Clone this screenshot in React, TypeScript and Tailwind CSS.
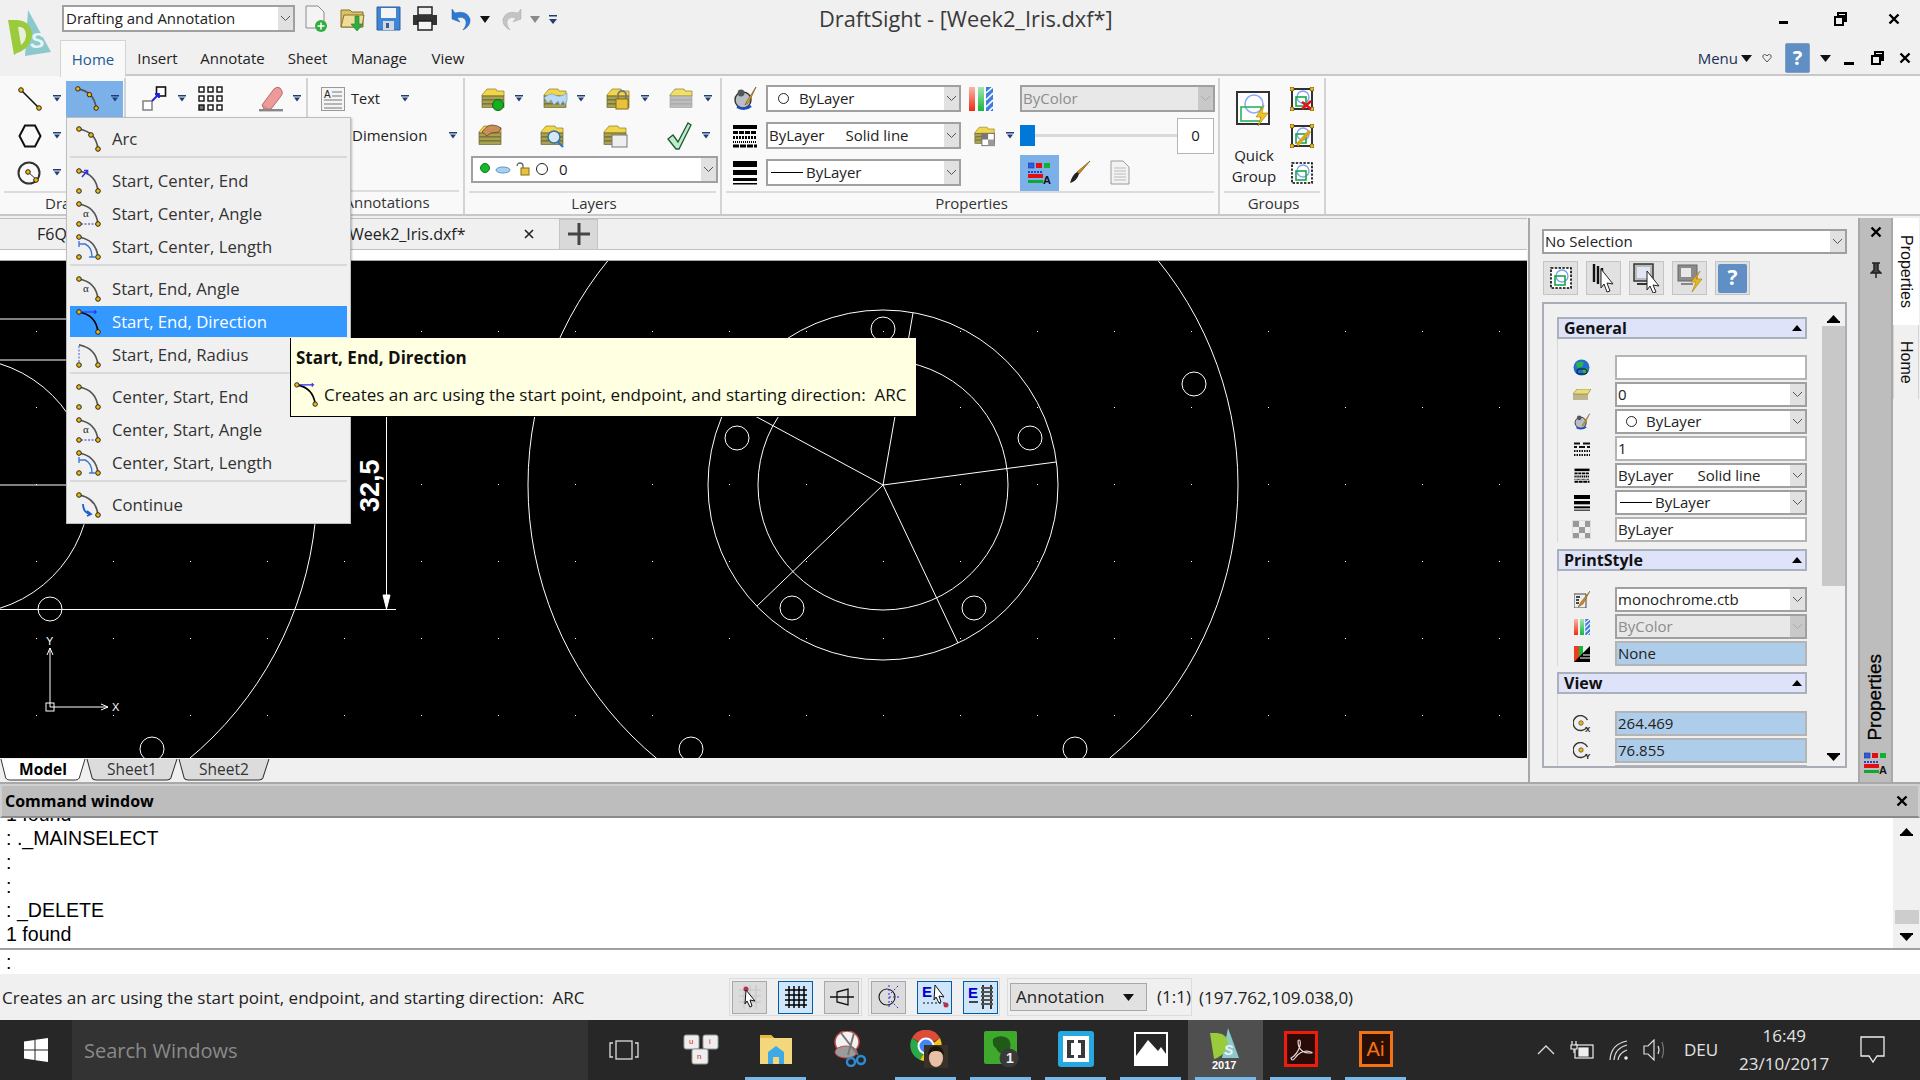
import type { ReactNode } from "react"
import clsx from "clsx"

// ---------- small shared bits ----------

function Drop({ className }: { className?: string }) {
  return (
    <svg width="8" height="7" viewBox="0 0 8 7" className={clsx("shrink-0", className)}>
      <rect x="0" y="0" width="8" height="1.5" fill="#1f3f73" />
      <path d="M1 2.5h6L4 6.5z" fill="#1f3f73" />
    </svg>
  )
}

function Chevron({ color = "#555" }: { color?: string }) {
  return (
    <svg width="11" height="7" viewBox="0 0 11 7">
      <path d="M1 1l4.5 4.5L10 1" fill="none" stroke={color} strokeWidth="1" />
    </svg>
  )
}

function Combo({ className, children, disabled }: { className?: string; children?: ReactNode; disabled?: boolean }) {
  return (
    <div className={clsx("flex shrink-0 border-2 border-[#a0a0a0]", disabled ? "bg-[#e8e8e8] text-[#8d8d8d]" : "bg-white", className)}>
      <div className="flex flex-1 items-center overflow-hidden whitespace-pre pl-[1px]">{children}</div>
      <div className={clsx("flex w-[15px] shrink-0 items-center justify-center", disabled ? "bg-[#c8c8c8]" : "bg-[#e1e1e1]")}>
        <Chevron color={disabled ? "#aaa" : "#555"} />
      </div>
    </div>
  )
}

function Tri({ up = true, className }: { up?: boolean; className?: string }) {
  return (
    <svg width="13" height="9" viewBox="0 0 13 9" className={className}>
      <path d={up ? "M6.5 1L12 7H1z" : "M6.5 8L12 2H1z"} fill="#000" />
      <rect x="0" y={up ? 7 : 0} width="13" height="2" fill="#000" />
    </svg>
  )
}

function CloseX({ size = 12 }: { size?: number }) {
  return (
    <svg width={size} height={size} viewBox="0 0 12 12">
      <path d="M1.5 1.5l9 9M10.5 1.5l-9 9" stroke="#000" strokeWidth="2.4" />
    </svg>
  )
}

function Restore() {
  return (
    <svg width="13" height="14" viewBox="0 0 13 14">
      <path d="M4 1h8v8h-2V4H4z" fill="none" stroke="#000" strokeWidth="2" />
      <rect x="1" y="5" width="8" height="8" fill="#f0f0f0" stroke="#000" strokeWidth="2" />
    </svg>
  )
}

function Pt({ x, y }: { x: number; y: number }) {
  return <circle cx={x} cy={y} r="2.3" fill="#f4b70a" stroke="#222" strokeWidth="1" />
}

// ---------- arc icons of the flyout ----------

function ArcIcon({ kind, size = 26 }: { kind: string; size?: number }) {
  const bottomLeft = ["sce", "sca", "scl", "ser", "cse", "csa", "csl"].includes(kind)
  const dark = kind === "sed"
  return (
    <svg width={size} height={size} viewBox="0 0 26 26" className="shrink-0">
      <path d="M3 3Q20 6 22 23" fill="none" stroke={dark ? "#000" : "#555"} strokeWidth="1.7" />
      {kind === "sed" && <path d="M3 3H21M19 1v4" stroke="#2a2af0" strokeWidth="1.2" fill="none" />}
      {kind === "sce" && <path d="M6 9L11 3M8 2.5h3.5v4" stroke="#3333e0" strokeWidth="1.6" fill="none" />}
      {(kind === "scl" || kind === "csl") && <path d="M3 10h7M3 7v6M9 10q7 3 7 13M13 23h6" stroke="#3b78d8" strokeWidth="1.4" fill="none" />}
      {kind === "ser" && <path d="M3 4v18" stroke="#3b5bd8" strokeWidth="1" strokeDasharray="2 1.5" />}
      {(kind === "sca" || kind === "csa") && <path d="M5 23h15" stroke="#2a2ae0" strokeWidth="1.2" strokeDasharray="2 1.5" />}
      {(kind === "sca" || kind === "csa" || kind === "sea") && (
        <text x="7" y="16" fontSize="11" fontFamily="Liberation Serif, serif" fill="#222">α</text>
      )}
      {kind === "cont" && <path d="M7 12q0 9 8 10M11 19l4 3-4 2" stroke="#1f5fd0" strokeWidth="1.8" fill="none" />}
      {kind !== "ser" && <Pt x={3} y={3} />}
      {kind === "ser" && <path d="M3 3q3 0 5 1" stroke="#555" fill="none" />}
      {kind === "arc" && <Pt x={15} y={9} />}
      {bottomLeft && <Pt x={3} y={23} />}
      <Pt x={22} y={23} />
    </svg>
  )
}

function MenuRow({ kind, label, active }: { kind: string; label: string; active?: boolean }) {
  return (
    <div className="h-[33px] pt-[1px]">
      <div className={clsx("mx-[3px] flex h-[31px] items-center pl-[6px] text-[16.7px]", active ? "bg-[#3399ff] text-white" : "text-[#333]")}>
        <ArcIcon kind={kind} />
        <span className="ml-[10px] whitespace-nowrap">{label}</span>
      </div>
    </div>
  )
}

function MenuSep() {
  return <div className="mx-[3px] mb-[6px] mt-[1px] h-[2px] bg-[#d9d9d9]" />
}

// ---------- ribbon icons ----------

function LayerIcon({ kind, w = 25 }: { kind: string; w?: number }) {
  const grey = kind === "grey"
  return (
    <svg width={w} height="24" viewBox="0 0 25 24" className="shrink-0">
      <path d="M1 8l5-6h9l1 2h7v5H1z" fill={grey ? "#f2df6a" : "#f2d64a"} stroke="#8a7a2a" strokeWidth=".7" />
      {[9, 13, 17].map((y) => (
        <rect key={y} x="1" y={y} width="22" height="3.4" fill={grey ? "#bdbdbd" : "#a8a24e"} stroke={grey ? "#999" : "#55521f"} strokeWidth=".6" />
      ))}
      {kind === "on" && <circle cx="17" cy="18" r="5.5" fill="#12b022" stroke="#0a6a12" />}
      {kind === "frost" && <path d="M1 11q6-6 11-3t12-2v7l-2 5-2-4-3 5-2-5-4 4-3-5-3 3z" fill="#b9d9f4" stroke="#6f9cc9" strokeWidth=".7" />}
      {kind === "lock" && (
        <g>
          <path d="M12 12V8a4 4 0 018 0v4" fill="none" stroke="#777" strokeWidth="1.8" />
          <rect x="10" y="12" width="12" height="10" fill="#e8c23e" stroke="#8a6d10" />
        </g>
      )}
      {kind === "hand" && <path d="M4 8q5-7 10-7t9 3l-2 4-8 1-4 3z" fill="#c98d5a" stroke="#6d4322" strokeWidth=".8" />}
      {kind === "find" && (
        <g>
          <circle cx="14" cy="13" r="6" fill="#d7e7ef" stroke="#3a6ea5" strokeWidth="1.6" />
          <path d="M18 18l5 5" stroke="#2f78c4" strokeWidth="2.4" />
        </g>
      )}
      {kind === "sheet" && <rect x="9" y="11" width="15" height="12" fill="#eee" stroke="#777" />}
      {kind === "checker" && (
        <g>
          <rect x="9" y="9" width="14" height="14" fill="#fff" stroke="#666" />
          <rect x="9" y="9" width="7" height="7" fill="#777" />
          <rect x="16" y="16" width="7" height="7" fill="#999" />
        </g>
      )}
    </svg>
  )
}

function ColorIcon({ size = 26 }: { size?: number }) {
  return (
    <svg width={size} height={size} viewBox="0 0 26 26" className="shrink-0">
      <circle cx="11" cy="14" r="8" fill="#b9bec6" stroke="#333" strokeWidth="1.4" />
      <circle cx="9" cy="7" r="3.4" fill="#555" />
      <path d="M5 21q8 4 14-1" stroke="#1c4fc4" strokeWidth="2.4" fill="none" />
      <path d="M24 1L15 15l-2 4 4-3z" fill="#e2a82b" stroke="#7a5510" strokeWidth=".7" />
    </svg>
  )
}

function BarsIcon({ w = 24, h = 24 }: { w?: number; h?: number }) {
  return (
    <svg width={w} height={h} viewBox="0 0 24 24" className="shrink-0">
      <defs>
        <linearGradient id="rd" x1="0" y1="0" x2="0" y2="1"><stop offset="0" stopColor="#f7b8ad" /><stop offset="1" stopColor="#f22a10" /></linearGradient>
        <linearGradient id="gr" x1="0" y1="0" x2="0" y2="1"><stop offset="0" stopColor="#a5e5b5" /><stop offset="1" stopColor="#14b83c" /></linearGradient>
      </defs>
      <rect x="0" y="0" width="6" height="24" fill="url(#rd)" />
      <rect x="9" y="0" width="6" height="24" fill="url(#gr)" />
      <rect x="17" y="0" width="7" height="24" fill="#3d7de0" />
      <path d="M17 6l7-6M17 13l7-7M17 20l7-7M20 24l4-4" stroke="#fff" strokeWidth="1.6" />
    </svg>
  )
}

function LineTypeIcon({ w = 24, h = 24 }: { w?: number; h?: number }) {
  return (
    <svg width={w} height={h} viewBox="0 0 24 24" className="shrink-0">
      <rect x="0" y="1" width="24" height="4" fill="#000" />
      <path d="M0 8.5h24" stroke="#000" strokeWidth="3" strokeDasharray="5 1" />
      <path d="M0 13.5h24" stroke="#000" strokeWidth="3" strokeDasharray="2 1" />
      <path d="M0 18h24" stroke="#000" strokeWidth="2" strokeDasharray="1 1" />
      <path d="M0 22h24" stroke="#000" strokeWidth="3" strokeDasharray="6 1" />
    </svg>
  )
}

function LineWeightIcon({ w = 24, h = 24 }: { w?: number; h?: number }) {
  return (
    <svg width={w} height={h} viewBox="0 0 24 24" className="shrink-0">
      <rect x="0" y="0" width="24" height="6" fill="#000" />
      <rect x="0" y="9" width="24" height="5" fill="#000" />
      <rect x="0" y="17" width="24" height="3" fill="#000" />
      <rect x="0" y="22" width="24" height="1.5" fill="#000" />
    </svg>
  )
}

function StyleIcon() {
  return (
    <svg width="24" height="22" viewBox="0 0 24 22" className="shrink-0">
      <rect x="0" y="1" width="6" height="5" fill="#2b5ce0" stroke="#1a3a9a" strokeWidth=".6" />
      <rect x="8" y="1" width="6" height="5" fill="#e01010" />
      <rect x="16" y="1" width="6" height="5" fill="#10b030" />
      <path d="M0 10h15" stroke="#2b3fd0" strokeWidth="2" strokeDasharray="2 1" />
      <rect x="0" y="12" width="15" height="4" fill="#e01010" />
      <rect x="0" y="18" width="15" height="3" fill="#10a830" />
      <text x="15" y="21.5" fontSize="11" fontWeight="700" fontFamily="Liberation Sans, sans-serif" fill="#111">A</text>
    </svg>
  )
}

function GroupIcon({ kind }: { kind: "del" | "edit" | "sel" }) {
  return (
    <svg width="24" height="24" viewBox="0 0 24 24" className="shrink-0">
      <rect x="2" y="2" width="20" height="20" fill="#fff" stroke="#000" strokeWidth="1.6" strokeDasharray={kind === "sel" ? "2.4 1.4" : undefined} />
      <circle cx="13" cy="10" r="6" fill="none" stroke="#7fa5ea" strokeWidth="1.4" />
      <rect x="6" y="10" width="10" height="9" fill="none" stroke="#18a84a" strokeWidth="1.6" />
      {kind !== "sel" && [[2, 2], [22, 2], [2, 22], [22, 22]].map(([x, y]) => <circle key={x * 100 + y} cx={x} cy={y} r="2.2" fill="#f4b70a" stroke="#222" strokeWidth=".6" />)}
      {kind === "del" && <path d="M12 15l9 7M21 14l-9 8" stroke="#e5101a" strokeWidth="2.6" />}
      {kind === "edit" && <path d="M7 21L20 7" stroke="#d9a520" strokeWidth="3.4" />}
    </svg>
  )
}

// ---------- ribbon groups ----------

function RibbonGroup({ label, className, children }: { label?: string; className?: string; children: ReactNode }) {
  return (
    <div className={clsx("mt-[2px] flex h-[136px] shrink-0 flex-col border-r-2 border-[#d4d4d4]", className)}>
      <div className="flex-1 pt-[2px]">{children}</div>
      <div className="mx-[4px] flex h-[24px] items-center justify-center border-t-2 border-[#dcdcdc] pb-[2px] pl-[3px] text-[#333]">{label}</div>
    </div>
  )
}

function Row({ children, className }: { children: ReactNode; className?: string }) {
  return <div className={clsx("flex h-[37px] items-center", className)}>{children}</div>
}

function Ribbon() {
  return (
    <div className="flex h-[140px] shrink-0 border-b-2 border-[#c8c8c8] bg-[#f9f9f9]">
      <RibbonGroup label="Draw" className="w-[126px]">
        <Row>
          <svg width="24" height="24" viewBox="0 0 24 24" className="ml-[18px]">
            <path d="M3 3l18 18" stroke="#111" strokeWidth="1.6" />
            <Pt x={3} y={3} />
            <Pt x={21} y={21} />
          </svg>
          <Drop className="ml-[11px]" />
          <div className="ml-[5px] flex h-[36px] w-[57px] items-center bg-[#7cb0e8] pl-[9px]">
            <ArcIcon kind="arc" size={25} />
            <Drop className="ml-[11px]" />
          </div>
        </Row>
        <Row>
          <svg width="24" height="24" viewBox="0 0 24 24" className="ml-[18px]">
            <path d="M7 1.5h10L22.500 12 17 22.500H7L1.500 12z" fill="none" stroke="#111" strokeWidth="2" />
          </svg>
          <Drop className="ml-[11px]" />
        </Row>
        <Row>
          <svg width="26" height="24" viewBox="0 0 26 24" className="ml-[17px]">
            <circle cx="12" cy="12" r="10.500" fill="none" stroke="#333" strokeWidth="2" />
            <path d="M11 11l9 8" stroke="#333" strokeWidth="1" />
            <Pt x={11} y={11} />
            <Pt x={19} y={19} />
          </svg>
          <Drop className="ml-[10px]" />
        </Row>
      </RibbonGroup>

      <RibbonGroup label="Modify" className="w-[182px]">
        <Row>
          <svg width="25" height="25" viewBox="0 0 25 25" className="ml-[16px]">
            <rect x="14.500" y="1" width="9" height="9" fill="#fff" stroke="#111" strokeWidth="1.600" />
            <rect x="1" y="15" width="9" height="9" fill="#fff" stroke="#888" strokeWidth="1.600" />
            <path d="M10 15l6-6M13 8h4v4" stroke="#2020e0" strokeWidth="1.800" fill="none" />
          </svg>
          <Drop className="ml-[11px]" />
          <svg width="25" height="25" viewBox="0 0 25 25" className="ml-[12px]">
            {[1, 10, 19].flatMap((y) => [1, 10, 19].map((x) => (
              <rect key={x * 100 + y} x={x} y={y} width="5" height="5" fill={y === 19 && x === 1 ? "#777" : "#fff"} stroke="#111" strokeWidth="1.400" />
            )))}
          </svg>
          <svg width="25" height="26" viewBox="0 0 25 26" className="ml-[36px]">
            <path d="M3 19L15 3q3-3 6-1l2 3q1 3-1 5L12 23H5z" fill="#ef9a9a" stroke="#b86a6a" />
            <path d="M3 19l6 4" stroke="#c98080" />
            <rect x="0" y="23" width="24" height="2.400" fill="#888" />
          </svg>
          <Drop className="ml-[9px]" />
        </Row>
      </RibbonGroup>

      <RibbonGroup label="Annotations" className="w-[157px]">
        <Row>
          <svg width="24" height="24" viewBox="0 0 24 24" className="ml-[13px]">
            <rect x=".5" y=".5" width="23" height="23" fill="#f4f4f4" stroke="#999" />
            <text x="3" y="11" fontSize="10" fontFamily="Liberation Sans, sans-serif" fill="#222">A</text>
            <path d="M11 5h10M11 9h10M3 13h18M3 17h18M3 21h18" stroke="#777" />
          </svg>
          <span className="ml-[6px] w-[46px] text-[14.500px]">Text</span>
          <Drop className="ml-[4px]" />
        </Row>
        <Row>
          <span className="ml-[44px] w-[97px] whitespace-nowrap">Dimension</span>
          <Drop />
        </Row>
      </RibbonGroup>

      <RibbonGroup label="Layers" className="w-[257px]">
        <Row>
          <span className="ml-[16px]"><LayerIcon kind="on" /></span>
          <Drop className="ml-[9px]" />
          <span className="ml-[20px]"><LayerIcon kind="frost" /></span>
          <Drop className="ml-[9px]" />
          <span className="ml-[21px]"><LayerIcon kind="lock" /></span>
          <Drop className="ml-[10px]" />
          <span className="ml-[20px]"><LayerIcon kind="grey" /></span>
          <Drop className="ml-[10px]" />
        </Row>
        <Row>
          <span className="ml-[13px]"><LayerIcon kind="hand" /></span>
          <span className="ml-[37px]"><LayerIcon kind="find" /></span>
          <span className="ml-[38px]"><LayerIcon kind="sheet" /></span>
          <svg width="25" height="30" viewBox="0 0 25 30" className="ml-[39px]">
            <path d="M1 18l5-4 5 7L21 2l3 2-12 24-3 0z" fill="#bfeccb" stroke="#1f5a34" strokeWidth="1.300" />
          </svg>
          <Drop className="ml-[10px]" />
        </Row>
        <Row>
          <Combo className="mb-[7px] ml-[6px] h-[27px] w-[247px]">
            <svg width="78" height="20" viewBox="0 0 78 20" className="ml-[3px] shrink-0">
              <circle cx="8" cy="9" r="4.500" fill="#14b82a" stroke="#0e7a1c" />
              <ellipse cx="26" cy="11" rx="7" ry="3" fill="#a9d0f0" stroke="#5f96c8" />
              <rect x="44" y="9" width="8" height="7" fill="#e8c23e" stroke="#8a6d10" />
              <path d="M40 7a3 3 0 016 0v2" fill="none" stroke="#666" strokeWidth="1.300" />
              <circle cx="65" cy="10" r="5.500" fill="#fff" stroke="#222" />
            </svg>
            <span className="ml-[4px]">0</span>
          </Combo>
        </Row>
      </RibbonGroup>

      <RibbonGroup label="Properties" className="w-[498px]">
        <Row>
          <span className="ml-[10px]"><ColorIcon /></span>
          <Combo className="ml-[8px] h-[27px] w-[195px]">
            <span className="ml-[9px] mr-[10px] inline-block h-[11px] w-[11px] rounded-full border border-[#222]" />
            <span>ByLayer</span>
          </Combo>
          <span className="ml-[8px]"><BarsIcon /></span>
          <Combo disabled className="ml-[27px] h-[27px] w-[195px] border-[#9aa5b5]">ByColor</Combo>
        </Row>
        <Row>
          <span className="ml-[11px]"><LineTypeIcon /></span>
          <Combo className="ml-[9px] h-[27px] w-[195px]">
            <span>ByLayer</span>
            <span className="ml-[21px]">Solid line</span>
          </Combo>
          <span className="ml-[13px]"><LayerIcon kind="checker" w={22} /></span>
          <Drop className="ml-[10px]" />
          <div className="ml-[6px] flex w-[195px] items-center">
            <div className="h-[21px] w-[15px] bg-[#0078d7]" />
            <div className="h-[3px] w-[142px] bg-[#dadada]" />
            <div className="flex h-[36px] w-[37px] items-center justify-center border border-[#b5b5b5] bg-white">0</div>
          </div>
        </Row>
        <Row>
          <span className="ml-[11px]"><LineWeightIcon /></span>
          <Combo className="ml-[9px] h-[27px] w-[195px]">
            <span className="ml-[2px] mr-[3px] h-[1px] w-[32px] bg-black" />
            <span>ByLayer</span>
          </Combo>
          <div className="ml-[59px] flex h-[36px] w-[39px] items-center justify-center bg-[#7cb0e8]"><StyleIcon /></div>
          <svg width="23" height="25" viewBox="0 0 23 25" className="ml-[9px]">
            <path d="M22 1L11 14l-2-2z" fill="#c98a26" stroke="#7a5010" strokeWidth=".7" />
            <path d="M9 12l2 2q-2 7-9 9 2-8 7-11z" fill="#222" />
          </svg>
          <svg width="20" height="25" viewBox="0 0 20 25" className="ml-[19px]">
            <path d="M1 1h12l6 6v17H1z" fill="#f2f2f2" stroke="#9a9a9a" />
            <path d="M4 8h12M4 11h12M4 14h12M4 17h12M4 20h12" stroke="#bbb" />
          </svg>
        </Row>
      </RibbonGroup>

      <RibbonGroup label="Groups" className="w-[106px]">
        <div className="flex">
          <div className="flex w-[68px] flex-col items-center pt-[10px]">
            <svg width="36" height="36" viewBox="0 0 36 36" className="ml-[-2px]">
              <rect x="2" y="2" width="32" height="32" fill="#fff" stroke="#333" strokeWidth="2" />
              <circle cx="19" cy="14" r="9" fill="none" stroke="#8aaef0" strokeWidth="1.600" />
              <rect x="6" y="17" width="20" height="14" fill="none" stroke="#2cb35a" strokeWidth="1.600" />
              <path d="M29 15l-8 12h5l-3 9 10-13h-6z" fill="#f2c21e" stroke="#a57f10" strokeWidth=".6" />
            </svg>
            <div className="mt-[19px] text-center leading-[21px]">Quick<br />Group</div>
          </div>
          <div className="ml-[2px] flex flex-col">
            <Row><GroupIcon kind="del" /></Row>
            <Row><GroupIcon kind="edit" /></Row>
            <Row><GroupIcon kind="sel" /></Row>
          </div>
        </div>
      </RibbonGroup>
    </div>
  )
}

// ---------- header ----------

function Header() {
  const tabs = [
    { label: "Insert", w: "w-[39px]" },
    { label: "Annotate", w: "w-[63px]" },
    { label: "Sheet", w: "w-[39px]" },
    { label: "Manage", w: "w-[56px]" },
    { label: "View", w: "w-[34px]" },
  ]
  return (
    <div className="flex h-[76px] shrink-0">
      <div className="w-[60px] shrink-0 pl-[7px] pt-[10px]">
        <svg width="45" height="46" viewBox="0 0 45 46">
          <path d="M21 0L44 42 18 46z" fill="#8cc8cc" />
          <path d="M1 10h9q14 1 15 15-1 13-15 18l-3 2z" fill="#9acb3c" />
          <path d="M11 17l3 0q5 2 5 8t-5 10z" fill="#e9efd8" />
          <text x="23" y="38" fontSize="22" fontStyle="italic" fontWeight="700" fontFamily="Liberation Sans, sans-serif" fill="#e8f3f3">S</text>
        </svg>
      </div>
      <div className="flex min-w-0 flex-1 flex-col">
        <div className="flex h-[40px] items-start pt-[5px]">
          <Combo className="ml-[2px] h-[27px] w-[233px]">
            <span className="ml-[1px]">Drafting and Annotation</span>
          </Combo>
          <svg width="24" height="27" viewBox="0 0 24 27" className="ml-[9px]">
            <path d="M2 1h12l6 6v16H2z" fill="#f4f4f4" stroke="#8a8a8a" />
            <circle cx="17" cy="21" r="6" fill="#2fae3f" />
            <path d="M17 17.500v7M13.500 21h7" stroke="#fff" strokeWidth="1.500" />
          </svg>
          <svg width="25" height="27" viewBox="0 0 25 27" className="ml-[12px]">
            <path d="M1 5h9l2 2h11v15H1z" fill="#d9c06a" stroke="#8a7326" />
            <path d="M4 10h20l-2 12H1z" fill="#efdc98" stroke="#8a7326" />
            <path d="M15 11v8h-4l6 7 6-7h-4v-8z" fill="#2fae3f" stroke="#1f7a2b" strokeWidth=".6" />
          </svg>
          <svg width="25" height="25" viewBox="0 0 25 25" className="ml-[11px] mt-[1px]">
            <path d="M1 1h23v23H1z" fill="#3f86d6" stroke="#2a5f9f" />
            <rect x="5" y="2" width="15" height="10" fill="#f4f4f4" />
            <rect x="7" y="15" width="11" height="9" fill="#cfd8e3" />
            <rect x="10" y="17" width="3" height="5" fill="#3a5f8f" />
          </svg>
          <svg width="26" height="25" viewBox="0 0 26 25" className="ml-[11px] mt-[1px]">
            <rect x="6" y="1" width="14" height="8" fill="#eee" stroke="#222" strokeWidth="1.500" />
            <path d="M1 9h24v10H1z" fill="#333" />
            <rect x="6" y="15" width="14" height="9" fill="#f4f4f4" stroke="#222" strokeWidth="1.500" />
          </svg>
          <svg width="24" height="25" viewBox="0 0 24 25" className="ml-[11px] mt-[1px]">
            <path d="M3 13V3l3 4q12-3 15 6 1 7-7 11 5-6 2-11-3-3-8-1l3 4z" fill="#2b7ad4" stroke="#1b5aa8" strokeWidth=".5" />
          </svg>
          <svg width="10" height="7" viewBox="0 0 10 7" className="ml-[7px] mt-[11px]"><path d="M0 0h10L5 7z" fill="#111" /></svg>
          <svg width="24" height="25" viewBox="0 0 24 25" className="ml-[10px] mt-[1px] scale-x-[-1]">
            <path d="M3 13V3l3 4q12-3 15 6 1 7-7 11 5-6 2-11-3-3-8-1l3 4z" fill="#c4c4c4" stroke="#a8a8a8" strokeWidth=".5" />
          </svg>
          <svg width="10" height="7" viewBox="0 0 10 7" className="ml-[6px] mt-[11px]"><path d="M0 0h10L5 7z" fill="#8a8a8a" /></svg>
          <svg width="8" height="10" viewBox="0 0 8 10" className="ml-[9px] mt-[10px]">
            <rect x="0" y="0" width="8" height="1.500" fill="#1f3f73" />
            <path d="M0 4h8L4 9z" fill="#1f3f73" />
          </svg>
          <div className="ml-[262px] mt-[-1px] whitespace-nowrap text-[21.800px] leading-[30px] text-[#3a3a3a]">DraftSight - [Week2_Iris.dxf*]</div>
          <div className="ml-auto flex">
            <div className="mr-[46px] mt-[16px] h-[3px] w-[9px] bg-black" />
            <div className="mr-[41px] mt-[7px]"><Restore /></div>
            <div className="mr-[20px] mt-[8px]"><CloseX /></div>
          </div>
        </div>
        <div className="flex h-[36px] items-center border-b-2 border-[#c8c8c8] pt-[2px]">
          <div className="z-10 flex h-[37px] w-[66px] items-center justify-center border border-b-0 border-[#d4d4d4] bg-[#f9f9f9] pt-[1px] text-[#1f5a96]">Home</div>
          <div className="ml-[12px] flex gap-[24px] text-[#222]">
            {tabs.map((t) => (
              <div key={t.label} className={clsx("flex justify-center whitespace-nowrap", t.w)}>{t.label}</div>
            ))}
          </div>
          <div className="ml-auto flex items-center">
            <span className="mr-[3px] text-[#1c2f55]">Menu</span>
            <svg width="11" height="7" viewBox="0 0 11 7"><path d="M0 0h11L5.500 7z" fill="#111" /></svg>
            <svg width="10" height="10" viewBox="0 0 10 10" className="ml-[10px]"><path d="M5 9L1 4.500Q0 2 2.500 1.500 4 1.500 5 3q1-1.500 2.500-1.500Q10 2 9 4.500z" fill="none" stroke="#555" /></svg>
            <div className="ml-[13px] flex h-[30px] w-[25px] items-center justify-center rounded-[2px] border border-[#7f9fc5] bg-[#5f8fc4] text-[20px] font-bold text-white">?</div>
            <svg width="11" height="7" viewBox="0 0 11 7" className="ml-[10px]"><path d="M0 0h11L5.500 7z" fill="#111" /></svg>
            <div className="ml-[13px] mt-[10px] h-[3px] w-[10px] bg-black" />
            <div className="ml-[17px]"><Restore /></div>
            <div className="ml-[15px] mr-[9px]"><CloseX /></div>
          </div>
        </div>
      </div>
    </div>
  )
}

// ---------- drawing area ----------

function Drawing() {
  const xs = Array.from({ length: 20 }, (_, i) => 36 + 77 * i)
  const ys = [331, 407, 484, 561, 638, 715]
  const holes = [
    [883, 329], [1030, 438], [974, 608], [792, 608], [737, 438],
    [1194, 384], [1075, 749], [691, 749], [152, 749], [50, 609],
  ]
  return (
    <svg viewBox="0 261 1527 497" className="block h-[497px] w-[1527px] bg-black" fill="none" stroke="#fff" strokeWidth="1">
      {xs.flatMap((x) => ys.map((y) => <rect key={`${x}-${y}`} x={x} y={y} width="1" height="1" fill="#fff" stroke="none" />))}
      <circle cx="883" cy="485" r="355" />
      <circle cx="883" cy="485" r="175" />
      <circle cx="883" cy="485" r="125" />
      <circle cx="-38" cy="486" r="355" />
      <circle cx="-38" cy="486" r="128" />
      {holes.map(([x, y]) => <circle key={x * 1000 + y} cx={x} cy={y} r="12" />)}
      <path d="M883 485L913 313M883 485L1056 462M883 485L958 643M883 485L757 606M883 485L729 402" />
      <path d="M0 319H70M0 360H70M0 485H70M0 609.500H396M386.500 416V609" />
      <path d="M383 595h7l-3.500 14z" fill="#fff" />
      <text x="0" y="0" transform="translate(379 512) rotate(-90)" fontSize="27" fontWeight="700" fontFamily="Liberation Sans, sans-serif" fill="#fff" stroke="none">32,5</text>
      <path d="M50 648V707H108M47 655l3-7 3 7M101 704l7 3-7 3" />
      <rect x="46" y="703" width="8" height="8" />
      <text x="46" y="645" fontSize="11" fontFamily="Liberation Sans, sans-serif" fill="#fff" stroke="none">Y</text>
      <text x="112" y="711" fontSize="11" fontFamily="Liberation Sans, sans-serif" fill="#fff" stroke="none">X</text>
    </svg>
  )
}

function SheetTab({ label, active, w }: { label: string; active?: boolean; w: string }) {
  return (
    <div className={clsx("relative flex h-[22px] items-center justify-center", w, active ? "font-bold text-black" : "text-[#333]")}>
      <svg viewBox="0 0 90 22" preserveAspectRatio="none" className="absolute inset-0 h-full w-full">
        <path d="M1 0L6 19Q7 21 10 21H79Q82 21 83 19L89 0" fill={active ? "#fff" : "#dcdcdc"} stroke="#333" strokeWidth="1" vectorEffect="non-scaling-stroke" />
      </svg>
      <span className="relative">{label}</span>
    </div>
  )
}

function DocArea() {
  return (
    <div className="flex w-[1527px] shrink-0 flex-col">
      <div className="flex h-[43px] flex-col">
        <div className="flex h-[32px] items-center border-y border-[#c0c0c0] bg-[#f0f0f0]">
          <span className="ml-[37px] w-[312px] text-[16px]">F6Q</span>
          <span className="w-[175px] whitespace-nowrap text-[16px]">Week2_Iris.dxf*</span>
          <svg width="10" height="10" viewBox="0 0 10 10"><path d="M1 1l8 8M9 1l-8 8" stroke="#222" strokeWidth="1.600" /></svg>
          <div className="ml-[25px] flex h-[31px] w-[39px] items-center justify-center border border-[#c4c4c4] bg-[#d9d9d9]">
            <svg width="22" height="22" viewBox="0 0 22 22"><path d="M11 0v22M0 11h22" stroke="#444" strokeWidth="3" /></svg>
          </div>
        </div>
        <div className="flex-1 border-b border-[#a8a8a8] bg-white" />
      </div>
      <Drawing />
      <div className="flex h-[24px] bg-[#f0f0f0] pt-[1px] text-[15.500px]">
        <SheetTab label="Model" active w="w-[86px]" />
        <SheetTab label="Sheet1" w="w-[92px]" />
        <SheetTab label="Sheet2" w="w-[92px]" />
      </div>
    </div>
  )
}

// ---------- flyout and tooltip ----------

function ArcMenu() {
  return (
    <div className="absolute left-[66px] top-[117px] z-20 w-[285px] border border-[#bdbdbd] bg-[#f0f0f0] pb-[2px] pt-[4px] shadow-[1px_1px_2px_rgba(0,0,0,0.25)]">
      <MenuRow kind="arc" label="Arc" />
      <MenuSep />
      <MenuRow kind="sce" label="Start, Center, End" />
      <MenuRow kind="sca" label="Start, Center, Angle" />
      <MenuRow kind="scl" label="Start, Center, Length" />
      <MenuSep />
      <MenuRow kind="sea" label="Start, End, Angle" />
      <MenuRow kind="sed" label="Start, End, Direction" active />
      <MenuRow kind="ser" label="Start, End, Radius" />
      <MenuSep />
      <MenuRow kind="cse" label="Center, Start, End" />
      <MenuRow kind="csa" label="Center, Start, Angle" />
      <MenuRow kind="csl" label="Center, Start, Length" />
      <MenuSep />
      <MenuRow kind="cont" label="Continue" />
    </div>
  )
}

function Tooltip() {
  return (
    <div className="absolute left-[290px] top-[338px] z-30 flex h-[79px] w-[626px] flex-col border-b border-l border-black bg-[#ffffe1] text-[17px] text-[#111]">
      <div className="ml-[5px] mt-[8px] font-bold leading-[24px]">Start, End, Direction</div>
      <div className="ml-[3px] mt-[12px] flex items-center">
        <ArcIcon kind="sed" size={25} />
        <span className="ml-[5px] whitespace-pre">Creates an arc using the start point, endpoint, and starting direction:  ARC</span>
      </div>
    </div>
  )
}

// ---------- properties panel ----------

function PropRow({ icon, children }: { icon: ReactNode; children: ReactNode }) {
  return (
    <div className="mb-[2px] flex h-[25px]">
      <div className="flex w-[57px] shrink-0 items-center justify-center pr-[10px]">{icon}</div>
      {children}
    </div>
  )
}

function Value({ children, blue }: { children?: ReactNode; blue?: boolean }) {
  return (
    <div className={clsx("flex w-[192px] items-center overflow-hidden whitespace-pre border-2 border-[#b4b4b4] pl-[1px]", blue ? "border-[#a5bcd6] bg-[#aecdea]" : "bg-white")}>
      {children}
    </div>
  )
}

function SectionHead({ label }: { label: string }) {
  return (
    <div className="flex h-[22px] items-center justify-between border-2 border-[#aab0bc] bg-[#dfe3fa] pl-[5px] pr-[3px] text-[16px] font-bold text-[#111]">
      <span>{label}</span>
      <svg width="10" height="6" viewBox="0 0 10 6"><path d="M5 0l5 6H0z" fill="#000" /></svg>
    </div>
  )
}

function PanelButton({ children, active }: { children: ReactNode; active?: boolean }) {
  return (
    <div className={clsx("flex h-[34px] w-[35px] items-center justify-center border border-[#c4c4c4] bg-[#e1e1e1]", active && "bg-[#d8d8d8]")}>{children}</div>
  )
}

function ZoomIcon({ letter }: { letter: string }) {
  return (
    <svg width="18" height="18" viewBox="0 0 18 18">
      <path d="M14 12a7.500 7.500 0 11.500-7" fill="none" stroke="#333" strokeWidth="1.400" />
      <circle cx="8" cy="8" r="2.200" fill="#f4b70a" stroke="#444" strokeWidth=".7" />
      <text x="12" y="17" fontSize="8" fontWeight="700" fontFamily="Liberation Sans, sans-serif" fill="#222">{letter}</text>
    </svg>
  )
}

function Panel() {
  return (
    <div className="w-[328px] shrink-0 pl-[12px] pt-[11px]">
      <Combo className="h-[25px] w-[305px]"><span>No Selection</span></Combo>
      <div className="ml-[1px] mt-[7px] flex gap-[8px]">
        <PanelButton><GroupIcon kind="sel" /></PanelButton>
        <PanelButton>
          <svg width="26" height="30" viewBox="0 0 26 30">
            <path d="M3 1v18M7 3v18M11 5v18" stroke="#111" strokeWidth="2.400" />
            <path d="M10 6l12 15-6-1 3 8-3 1-3-8-3 4z" fill="#fff" stroke="#222" />
          </svg>
        </PanelButton>
        <PanelButton>
          <svg width="28" height="30" viewBox="0 0 28 30">
            <rect x="1" y="1" width="19" height="17" fill="#bbb" stroke="#333" strokeWidth="1.500" />
            <rect x="4" y="4" width="13" height="11" fill="#dfe8f2" />
            <path d="M4 21h14" stroke="#333" strokeWidth="2" />
            <path d="M14 8l12 15-6-1 3 7-3 1-3-7-3 4z" fill="#fff" stroke="#222" />
          </svg>
        </PanelButton>
        <PanelButton>
          <svg width="26" height="30" viewBox="0 0 26 30">
            <rect x="1" y="2" width="19" height="16" fill="#8b8b8b" stroke="#666" />
            <rect x="4" y="5" width="10" height="9" fill="#e8e8e8" />
            <path d="M4 21h12" stroke="#888" strokeWidth="2" />
            <path d="M23 8l-9 11h5l-4 10 10-13h-6z" fill="#e9b91a" stroke="#a57f10" strokeWidth=".6" />
          </svg>
        </PanelButton>
        <PanelButton active>
          <div className="flex h-[29px] w-[29px] items-center justify-center rounded-[2px] bg-[#5f8fc4] text-[21px] font-bold text-white">?</div>
        </PanelButton>
      </div>

      <div className="mt-[7px] flex h-[466px] w-[305px] overflow-hidden border-2 border-[#a9adb5]">
        <div className="ml-[13px] w-[250px] shrink-0 overflow-hidden pt-[13px]">
          <SectionHead label="General" />
          <div className="border-l border-[#d8d8d8] pt-[16px]">
            <PropRow icon={
              <svg width="17" height="17" viewBox="0 0 17 17">
                <circle cx="8.500" cy="8.500" r="8" fill="#1f6fd0" />
                <path d="M3 4q5-3 8 0l-2 4-5 1zM9 11l5-2 1 3-4 3z" fill="#2fb24a" />
                <rect x="4" y="10" width="10" height="5" rx="2" fill="none" stroke="#111" />
              </svg>
            }><Value /></PropRow>
            <PropRow icon={
              <svg width="18" height="12" viewBox="0 0 18 12">
                <path d="M4 0h14l-3 5H0z" fill="#e8dd7a" stroke="#8a7a2a" strokeWidth=".6" />
                <path d="M0 6h15M0 8h15M0 10h15" stroke="#8a7a2a" />
              </svg>
            }><Combo className="w-[192px]">0</Combo></PropRow>
            <PropRow icon={<ColorIcon size={18} />}>
              <Combo className="w-[192px]">
                <span className="ml-[8px] mr-[9px] inline-block h-[11px] w-[11px] rounded-full border border-[#222]" />
                <span>ByLayer</span>
              </Combo>
            </PropRow>
            <PropRow icon={
              <svg width="16" height="14" viewBox="0 0 16 14">
                <path d="M0 1.500h6M9 1.500h7M0 5h3M5 5h6M13 5h3" stroke="#111" strokeWidth="2" />
                <path d="M0 9h16M0 13h16" stroke="#111" strokeWidth="2" strokeDasharray="1.500 1" />
              </svg>
            }><Value>1</Value></PropRow>
            <PropRow icon={<LineTypeIcon w={16} h={15} />}>
              <Combo className="w-[192px]">
                <span>ByLayer</span>
                <span className="ml-[24px]">Solid line</span>
              </Combo>
            </PropRow>
            <PropRow icon={<LineWeightIcon w={16} h={16} />}>
              <Combo className="w-[192px]">
                <span className="ml-[2px] mr-[3px] h-[1px] w-[32px] bg-black" />
                <span>ByLayer</span>
              </Combo>
            </PropRow>
            <PropRow icon={
              <svg width="19" height="19" viewBox="0 0 19 19">
                <rect x=".500" y=".500" width="18" height="18" fill="#eee" stroke="#ddd" />
                <path d="M1 1h6v6H1zM13 1h5v6h-5zM7 7h6v6H7zM1 13h6v5H1zM13 13h5v5h-5z" fill="#999" />
              </svg>
            }><Value>ByLayer</Value></PropRow>
          </div>
          <div className="mt-[7px]"><SectionHead label="PrintStyle" /></div>
          <div className="border-l border-[#d8d8d8] pt-[16px]">
            <PropRow icon={
              <svg width="16" height="17" viewBox="0 0 16 17">
                <path d="M0 3h12v14H0z" fill="#eee" stroke="#444" />
                <path d="M2 6h4M2 9h3M2 12h3" stroke="#111" strokeWidth="1.500" />
                <path d="M16 0L7 11l-3 5 5-3z" fill="#c98a26" stroke="#7a5010" strokeWidth=".5" />
              </svg>
            }><Combo className="w-[192px]">monochrome.ctb</Combo></PropRow>
            <PropRow icon={<BarsIcon w={16} h={16} />}><Combo disabled className="w-[192px]">ByColor</Combo></PropRow>
            <PropRow icon={
              <svg width="16" height="16" viewBox="0 0 16 16">
                <rect width="5" height="16" fill="#ef3b20" />
                <rect x="5" width="4" height="16" fill="#18b83c" />
                <path d="M16 0L0 16h16z" fill="#000" />
                <path d="M9 9h7M6 12h10" stroke="#fff" />
              </svg>
            }><Value blue>None</Value></PropRow>
          </div>
          <div className="mt-[6px]"><SectionHead label="View" /></div>
          <div className="border-l border-[#d8d8d8] pt-[17px]">
            <PropRow icon={<ZoomIcon letter="X" />}><Value blue>264.469</Value></PropRow>
            <PropRow icon={<ZoomIcon letter="Y" />}><Value blue>76.855</Value></PropRow>
            <PropRow icon={<ZoomIcon letter="Z" />}><Value blue /></PropRow>
          </div>
        </div>
        <div className="ml-[15px] flex w-[24px] flex-col items-center pt-[10px]">
          <Tri />
          <div className="mt-[3px] h-[260px] w-[23px] bg-[#c8c8c8]" />
          <Tri up={false} className="mt-auto mb-[4px]" />
        </div>
      </div>
    </div>
  )
}

function SideBars() {
  return (
    <>
      <div className="flex w-[35px] shrink-0 flex-col items-center border-x-2 border-[#a8a8a8] bg-[#bdbdbd] pt-[8px] pb-[4px]">
        <CloseX />
        <svg width="12" height="16" viewBox="0 0 12 16" className="mt-[24px]">
          <path d="M2 1h8M4 1v7L1 11h10L8 8V1M6 11v5" stroke="#222" strokeWidth="1.500" fill="#444" />
        </svg>
        <div className="mt-auto rotate-180 font-['Liberation_Sans',sans-serif] text-[19px] font-medium text-black [-webkit-text-stroke:0.3px_black] [writing-mode:vertical-rl]">Properties</div>
        <div className="mt-[11px] mb-[4px]"><StyleIcon /></div>
      </div>
      <div className="flex w-[27px] shrink-0 flex-col bg-[#f0f0f0] pr-[1px] font-['Liberation_Sans',sans-serif] text-[16px] text-[#111]">
        <div className="flex h-[107px] items-center justify-center bg-white [writing-mode:vertical-rl]">Properties</div>
        <div className="flex h-[74px] items-center justify-center border-y border-[#d4d4d4] [writing-mode:vertical-rl]">Home</div>
      </div>
    </>
  )
}

// ---------- command window and status bar ----------

function CommandWindow() {
  const lines = [": ._MAINSELECT", ":", ":", ": _DELETE", "1 found"]
  return (
    <div className="flex h-[192px] shrink-0 flex-col border-t-2 border-[#a8a8a8] font-['Liberation_Sans',sans-serif] text-[19.600px] text-black">
      <div className="flex h-[34px] shrink-0 items-center justify-between border-2 border-[#d0d0d0] border-b-[#8a8a8a] bg-[#bdbdbd] pl-[3px] pr-[10px]">
        <span className="font-['Open_Sans',sans-serif] text-[16px] font-bold">Command window</span>
        <CloseX />
      </div>
      <div className="flex h-[132px] shrink-0 border-b-2 border-[#a0a0a0] bg-white">
        <div className="relative flex-1 overflow-hidden whitespace-pre pl-[6px] leading-[24px]">
          <div className="mt-[-16px]">1 found</div>
          <div>
            {lines.map((l, i) => <div key={i}>{l}</div>)}
          </div>
        </div>
        <div className="flex w-[27px] flex-col items-center bg-[#f0f0f0] pb-[6px] pt-[9px]">
          <Tri />
          <div className="mt-auto h-[14px] w-[24px] bg-[#cdcdcd]" />
          <Tri up={false} className="mt-[9px]" />
        </div>
      </div>
      <div className="flex-1 bg-white pl-[6px] leading-[24px]">:</div>
    </div>
  )
}

function StatusButton({ children, on }: { children: ReactNode; on?: boolean }) {
  return (
    <div className={clsx("flex h-[33px] w-[35px] items-center justify-center border", on ? "border-[#005ea8] bg-[#cfe5fa]" : "border-[#a8a8a8] bg-[#dcdcdc]")}>{children}</div>
  )
}

function StatusBar() {
  return (
    <div className="flex h-[46px] shrink-0 items-center bg-[#f0f0f0] text-[17px] text-[#222]">
      <span className="ml-[2px] w-[727px] whitespace-pre pt-[1px]">Creates an arc using the start point, endpoint, and starting direction:  ARC</span>
      <div className="flex h-[38px] w-[133px] items-center gap-[11px] border border-[#dcdcdc] pl-[2px]">
        <StatusButton>
          <svg width="26" height="28" viewBox="0 0 26 28">
            <path d="M2 7h22M2 13h22M2 19h22M7 2v24M13 2v24M19 2v24" stroke="#c4c4c4" />
            <circle cx="9" cy="6" r="2.500" fill="#b5304f" />
            <path d="M9 7l9 11-5-1 2 6-2 1-3-6-2 3z" fill="#fff" stroke="#111" />
          </svg>
        </StatusButton>
        <StatusButton on>
          <svg width="24" height="24" viewBox="0 0 24 24"><path d="M1 5h22M1 10h22M1 15h22M1 20h22M5 1v22M10 1v22M15 1v22M20 1v22" stroke="#000" strokeWidth="1.500" /></svg>
        </StatusButton>
        <StatusButton>
          <svg width="24" height="20" viewBox="0 0 24 20"><path d="M7 5l11-3v16L7 15zM0 10h24" fill="none" stroke="#111" strokeWidth="1.300" /></svg>
        </StatusButton>
      </div>
      <div className="ml-[6px] flex h-[38px] w-[132px] items-center gap-[11px] border border-[#dcdcdc] pl-[2px]">
        <StatusButton>
          <svg width="24" height="26" viewBox="0 0 24 26">
            <circle cx="10" cy="13" r="8" fill="none" stroke="#222" strokeWidth="1.200" />
            <path d="M12 1v24M12 13h12M14 9l8-8M14 17l8 8" stroke="#2a2ae0" strokeDasharray="2 2" />
          </svg>
        </StatusButton>
        <StatusButton on>
          <span className="flex">
            <svg width="28" height="28" viewBox="0 0 28 28">
              <text x="1" y="14" fontSize="15" fontWeight="700" fontFamily="Liberation Sans, sans-serif" fill="#0000d0">E</text>
              <path d="M2 20h22" stroke="#111" strokeDasharray="2 2" />
              <circle cx="25" cy="22" r="2.500" fill="#b5304f" />
              <path d="M14 2l9 12-5-1 2 6-2 1-3-6-2 3z" fill="#fff" stroke="#111" />
            </svg>
          </span>
        </StatusButton>
        <StatusButton on>
          <svg width="28" height="26" viewBox="0 0 28 26">
            <text x="1" y="14" fontSize="15" fontWeight="700" fontFamily="Liberation Sans, sans-serif" fill="#0000d0">E</text>
            <path d="M2 18h9" stroke="#111" strokeWidth="1.500" />
            <path d="M16 1v24M24 1v24" stroke="#333" strokeWidth="2" />
            <path d="M14 4h12M14 8h12M14 12h12M14 16h12M14 20h12" stroke="#555" strokeWidth="2" />
          </svg>
        </StatusButton>
      </div>
      <div className="ml-[7px] flex h-[38px] w-[185px] items-center border border-[#dcdcdc] pl-[2px]">
        <div className="flex h-[28px] w-[137px] items-center justify-between border border-[#a8a8a8] bg-[#e1e1e1] px-[5px] pr-[12px]">
          <span>Annotation</span>
          <svg width="11" height="7" viewBox="0 0 11 7"><path d="M0 0h11L5.500 7z" fill="#111" /></svg>
        </div>
        <span className="ml-[10px]">(1:1)</span>
      </div>
      <span className="ml-[7px] whitespace-nowrap pt-[1px]">(197.762,109.038,0)</span>
    </div>
  )
}

// ---------- taskbar ----------

function TaskSlot({ children, open, active }: { children: ReactNode; open?: boolean; active?: boolean }) {
  return (
    <div className={clsx("flex h-full w-[75px] shrink-0 flex-col", active && "bg-[#4f4f4f]")}>
      <div className="flex flex-1 items-center justify-center">{children}</div>
      <div className={clsx("mx-[7px] h-[3px]", open && "bg-[#76b9ed]")} />
    </div>
  )
}

function Taskbar() {
  return (
    <div className="flex h-[60px] shrink-0 items-center bg-[#272727]">
      <div className="flex h-full w-[72px] items-center justify-center">
        <svg width="24" height="24" viewBox="0 0 24 24" className="mb-[1px]">
          <path d="M0 3.500l10.500-1.500v9.500H0zM11.500 1.800L24 0v11.500H11.500zM0 12.500h10.500V22L0 20.500zM11.500 12.500H24V24l-12.500-1.800z" fill="#fff" />
        </svg>
      </div>
      <div className="flex h-full w-[516px] items-center bg-[#333] pl-[12px] pt-[1px] text-[20px] text-[#8a8a8a]">Search Windows</div>
      <svg width="30" height="20" viewBox="0 0 30 20" className="ml-[21px]" fill="none" stroke="#ddd" strokeWidth="1.300">
        <rect x="7" y="1" width="16" height="18" />
        <path d="M4 3H1v14h3M26 3h3v14h-3" />
      </svg>
      <div className="ml-[24px] flex h-full">
        <TaskSlot>
          <svg width="36" height="34" viewBox="0 0 36 34" fontFamily="Liberation Sans, sans-serif" fontSize="8" fill="#e02020">
            <rect x="1" y="3" width="15" height="14" rx="2" fill="#eee" stroke="#999" />
            <rect x="20" y="3" width="15" height="14" rx="2" fill="#eee" stroke="#999" />
            <rect x="9" y="17" width="16" height="15" rx="2" fill="#eee" stroke="#999" />
            <text x="6" y="12">u</text>
            <text x="26" y="12">i</text>
            <text x="14" y="27">n</text>
          </svg>
        </TaskSlot>
        <TaskSlot open>
          <svg width="32" height="32" viewBox="0 0 32 32">
            <path d="M0 2h11l3 3h18v26H0z" fill="#f3d77c" />
            <path d="M0 2h11l3 3H0z" fill="#e8b93a" />
            <path d="M8 31V19L16 13l8 6v12h-5v-7h-6v7z" fill="#3fa9e8" />
          </svg>
        </TaskSlot>
        <TaskSlot>
          <svg width="34" height="36" viewBox="0 0 34 36">
            <ellipse cx="13" cy="11" rx="12" ry="11" fill="#f2f2f2" stroke="#c24b4b" strokeWidth="1.500" />
            <ellipse cx="12" cy="21" rx="11" ry="6" fill="#9b9b9b" stroke="#c24b4b" />
            <path d="M7 2l17 22M20 2L14 24" stroke="#777" strokeWidth="2" />
            <circle cx="27" cy="29" r="4" fill="none" stroke="#2d8bd8" strokeWidth="2.400" />
            <circle cx="17" cy="31" r="4" fill="none" stroke="#2d8bd8" strokeWidth="2.400" />
          </svg>
        </TaskSlot>
        <TaskSlot open>
          <svg width="38" height="38" viewBox="0 0 38 38" className="translate-x-[3px]">
            <path d="M16 16L2 8a16 16 0 0128 0z" fill="#dd4b39" />
            <path d="M2 8a16 16 0 008 22l7-12z" fill="#2aa84a" />
            <path d="M30 8a16 16 0 01-20 22l7-12z" fill="#f6c218" />
            <circle cx="16" cy="16" r="7.500" fill="#4285f4" stroke="#fff" strokeWidth="2" />
            <rect x="14" y="15" width="24" height="23" fill="#3a3128" />
            <ellipse cx="26" cy="28" rx="7" ry="9" fill="#e8c0a8" />
            <path d="M18 26q0-10 8-10t8 10q-2-5-8-5t-8 5z" fill="#1d1510" />
          </svg>
        </TaskSlot>
        <TaskSlot open>
          <svg width="36" height="36" viewBox="0 0 36 36" className="translate-x-[1px]">
            <rect x="0" y="0" width="33" height="33" rx="2" fill="#3fa92e" />
            <path d="M9 8q5-4 12-2t5 12q-2 5-7 5-5-1-7-6-4-2-3-9z" fill="#1f5a16" />
            <circle cx="25" cy="27" r="9.500" fill="#3a3a3a" />
            <text x="22" y="32" fontSize="14" fontWeight="700" fontFamily="Liberation Sans, sans-serif" fill="#eee">1</text>
          </svg>
        </TaskSlot>
        <TaskSlot open>
          <svg width="36" height="36" viewBox="0 0 36 36">
            <rect width="36" height="36" rx="3" fill="#25a9e0" />
            <rect x="5" y="5" width="26" height="26" fill="#fff" />
            <path d="M16 9H9v18h7v-3h-3V12h3zM20 9h7v18h-7v-3h3V12h-3z" fill="#3a3a3a" />
          </svg>
        </TaskSlot>
        <TaskSlot open>
          <svg width="34" height="34" viewBox="0 0 34 34">
            <rect width="34" height="34" fill="#fff" />
            <rect x="2" y="2" width="30" height="30" fill="#272727" />
            <path d="M2 32V24L14 8l10 11 3-4 5 7v10z" fill="#fff" />
          </svg>
        </TaskSlot>
        <TaskSlot open active>
          <svg width="30" height="42" viewBox="0 0 30 42" className="translate-x-[-2px]">
            <path d="M19 0l11 30H13z" fill="#8cc8cc" />
            <path d="M1 5h7q11 1 11 11-1 9-11 14l-3 1z" fill="#9acb3c" />
            <text x="15" y="27" fontSize="14" fontStyle="italic" fontWeight="700" fontFamily="Liberation Sans, sans-serif" fill="#e8f3f3">S</text>
            <text x="3" y="41" fontSize="11" fontWeight="700" fontFamily="Liberation Sans, sans-serif" fill="#fff">2017</text>
          </svg>
        </TaskSlot>
        <TaskSlot open>
          <svg width="34" height="36" viewBox="0 0 34 36">
            <rect x="1.500" y="1.500" width="31" height="33" fill="#2a0b08" stroke="#ef1c0c" strokeWidth="3" />
            <path d="M7 27q6-3 9-12 1-6-1-6t0 7q3 6 10 6t-2-2q-7 0-12 7-3 4-4 0z" fill="none" stroke="#e8d8d8" strokeWidth="1.200" />
          </svg>
        </TaskSlot>
        <TaskSlot open>
          <div className="flex h-[36px] w-[34px] items-center justify-center border-[3px] border-[#f47216] bg-[#2a1004] font-['Liberation_Sans',sans-serif] text-[20px] font-medium text-[#f47216]">Ai</div>
        </TaskSlot>
      </div>
      <svg width="18" height="10" viewBox="0 0 18 10" className="ml-[124px]"><path d="M1 9l8-8 8 8" fill="none" stroke="#ddd" strokeWidth="1.300" /></svg>
      <svg width="24" height="18" viewBox="0 0 24 18" className="ml-[15px]" fill="none" stroke="#eee" strokeWidth="1.200">
        <rect x="5" y="4" width="18" height="13" />
        <rect x="9" y="7" width="9" height="8" fill="#eee" />
        <path d="M1 4h6v4H1zM4 8v4M2 0v4M6 0v4" fill="#272727" />
      </svg>
      <svg width="22" height="22" viewBox="0 0 22 22" className="ml-[15px]" fill="none" stroke="#ddd" strokeWidth="1.200">
        <path d="M1 21Q2 5 18 2M5 21Q6 9 18 6M9 21q1-7 9-10" />
        <circle cx="17" cy="19" r="1.800" fill="#eee" stroke="none" />
      </svg>
      <svg width="23" height="22" viewBox="0 0 23 22" className="ml-[12px]" fill="none" stroke="#ddd" strokeWidth="1.200">
        <path d="M1 7h4l6-6v20l-6-6H1z" />
        <path d="M15 7q2 4 0 8" />
        <path d="M19 3q3 8 0 16" stroke="#777" />
      </svg>
      <span className="ml-[18px] text-[17px] text-[#e4e4e4]">DEU</span>
      <div className="ml-[18px] flex w-[96px] flex-col items-center text-[17px] leading-[28px] text-[#e4e4e4]">
        <span>16:49</span>
        <span>23/10/2017</span>
      </div>
      <svg width="25" height="28" viewBox="0 0 25 28" className="ml-[28px]" fill="none" stroke="#eee" strokeWidth="1.300">
        <path d="M1 1h23v19h-7l-4 6-4-6H1z" />
      </svg>
    </div>
  )
}

export default function App() {
  return (
    <div className="relative flex h-[1080px] w-[1920px] flex-col overflow-hidden bg-[#f0f0f0] font-['Open_Sans','Noto_Sans',sans-serif] text-[15px] text-[#222]">
      <Header />
      <Ribbon />
      <div className="flex h-[566px] shrink-0 pt-[2px]">
        <DocArea />
        <div className="w-[3px] shrink-0 border-r-2 border-[#a8a8a8] bg-[#f0f0f0]" />
        <Panel />
        <SideBars />
      </div>
      <CommandWindow />
      <StatusBar />
      <Taskbar />
      <ArcMenu />
      <Tooltip />
    </div>
  )
}
